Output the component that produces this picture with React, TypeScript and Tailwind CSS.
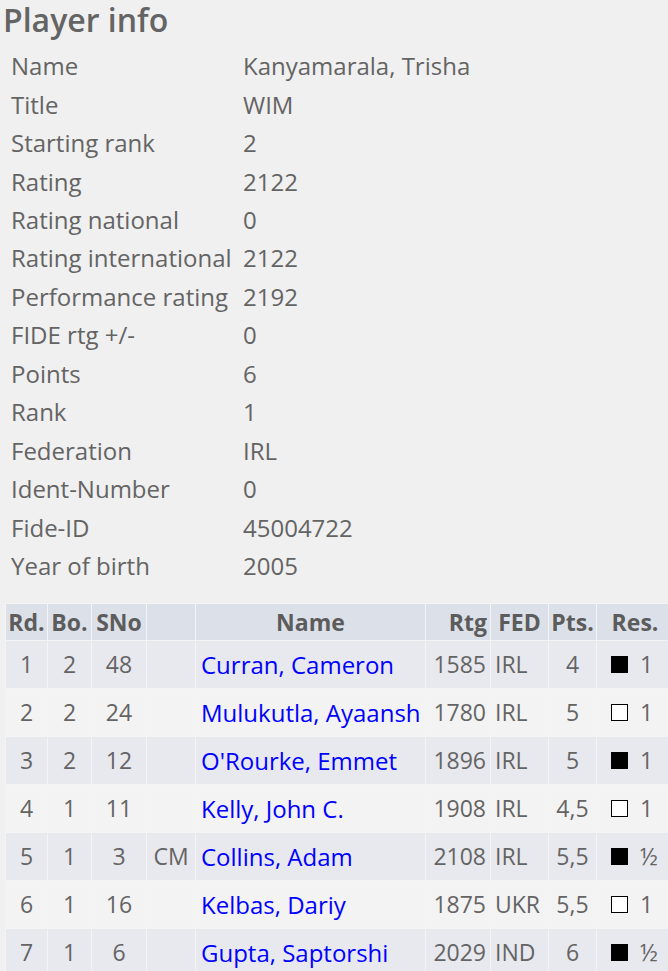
const info: [string, string][] = [
  ["Name", "Kanyamarala, Trisha"],
  ["Title", "WIM"],
  ["Starting rank", "2"],
  ["Rating", "2122"],
  ["Rating national", "0"],
  ["Rating international", "2122"],
  ["Performance rating", "2192"],
  ["FIDE rtg +/-", "0"],
  ["Points", "6"],
  ["Rank", "1"],
  ["Federation", "IRL"],
  ["Ident-Number", "0"],
  ["Fide-ID", "45004722"],
  ["Year of birth", "2005"],
];

type Game = {
  rd: number;
  bo: number;
  sno: number;
  title: string;
  name: string;
  rtg: number;
  fed: string;
  pts: string;
  black: boolean;
  res: string;
};

const games: Game[] = [
  { rd: 1, bo: 2, sno: 48, title: "", name: "Curran, Cameron", rtg: 1585, fed: "IRL", pts: "4", black: true, res: "1" },
  { rd: 2, bo: 2, sno: 24, title: "", name: "Mulukutla, Ayaansh", rtg: 1780, fed: "IRL", pts: "5", black: false, res: "1" },
  { rd: 3, bo: 2, sno: 12, title: "", name: "O'Rourke, Emmet", rtg: 1896, fed: "IRL", pts: "5", black: true, res: "1" },
  { rd: 4, bo: 1, sno: 11, title: "", name: "Kelly, John C.", rtg: 1908, fed: "IRL", pts: "4,5", black: false, res: "1" },
  { rd: 5, bo: 1, sno: 3, title: "CM", name: "Collins, Adam", rtg: 2108, fed: "IRL", pts: "5,5", black: true, res: "½" },
  { rd: 6, bo: 1, sno: 16, title: "", name: "Kelbas, Dariy", rtg: 1875, fed: "UKR", pts: "5,5", black: false, res: "1" },
  { rd: 7, bo: 1, sno: 6, title: "", name: "Gupta, Saptorshi", rtg: 2029, fed: "IND", pts: "6", black: true, res: "½" },
];

const th = "border border-[#f4f4f4] font-bold text-[23px] leading-none text-[#5c5c5c]";
const td = "border border-[#f4f4f4] text-[23px] leading-none";

export default function App() {
  return (
    <div
      className="w-[668px] h-[971px] overflow-hidden bg-[#f0f0f0] text-[#646464]"
      style={{ fontFamily: '"Open Sans", "Noto Sans", sans-serif' }}
    >
      <h2 className="pl-[3px] pb-[7px] text-[32px] font-semibold leading-[40px]">Player info</h2>

      <table className="ml-[11px] border-collapse">
        <tbody>
          {info.map(([k, v]) => (
            <tr key={k} className="h-[38.46px] text-[24px] leading-none">
              <td className="w-[232px] p-0 align-middle">{k}</td>
              <td className="p-0 align-middle">{v}</td>
            </tr>
          ))}
        </tbody>
      </table>

      <table className="mt-[18px] ml-[5px] w-[668px] table-fixed border-collapse">
        <colgroup>
          <col className="w-[42px]" />
          <col className="w-[44px]" />
          <col className="w-[55px]" />
          <col className="w-[49px]" />
          <col className="w-[230px]" />
          <col className="w-[65px]" />
          <col className="w-[58px]" />
          <col className="w-[48px]" />
          <col className="w-[77px]" />
        </colgroup>
        <thead>
          <tr className="h-[37px] bg-[#dce0e8]">
            <th className={`${th} text-center`}>Rd.</th>
            <th className={`${th} text-center`}>Bo.</th>
            <th className={`${th} text-center`}>SNo</th>
            <th className={th}></th>
            <th className={`${th} text-center`}>Name</th>
            <th className={`${th} pr-[3px] text-right`}>Rtg</th>
            <th className={`${th} text-center`}>FED</th>
            <th className={`${th} text-center`}>Pts.</th>
            <th className={`${th} text-center`}>Res.</th>
          </tr>
        </thead>
        <tbody>
          {games.map((g, i) => (
            <tr key={g.rd} className={`h-[48px] ${i % 2 === 0 ? "bg-[#e8e9ef]" : "bg-[#f3f3f3]"}`}>
              <td className={`${td} text-center`}>{g.rd}</td>
              <td className={`${td} text-center`}>{g.bo}</td>
              <td className={`${td} text-center`}>{g.sno}</td>
              <td className={`${td} text-center`}>{g.title}</td>
              <td className={`${td} whitespace-nowrap pl-[5px] text-[24px] text-[#0000ff]`}>{g.name}</td>
              <td className={`${td} pr-[4px] text-right`}>{g.rtg}</td>
              <td className={`${td} pl-[4px]`}>{g.fed}</td>
              <td className={`${td} text-center`}>{g.pts}</td>
              <td className={`${td} pl-[14px]`}>
                <div className="flex items-center">
                  <span
                    className={`inline-block h-[17px] w-[17px] ${
                      g.black ? "bg-black" : "border border-black bg-white"
                    }`}
                  />
                  <span className="ml-[12px]">{g.res}</span>
                </div>
              </td>
            </tr>
          ))}
        </tbody>
      </table>
    </div>
  );
}
